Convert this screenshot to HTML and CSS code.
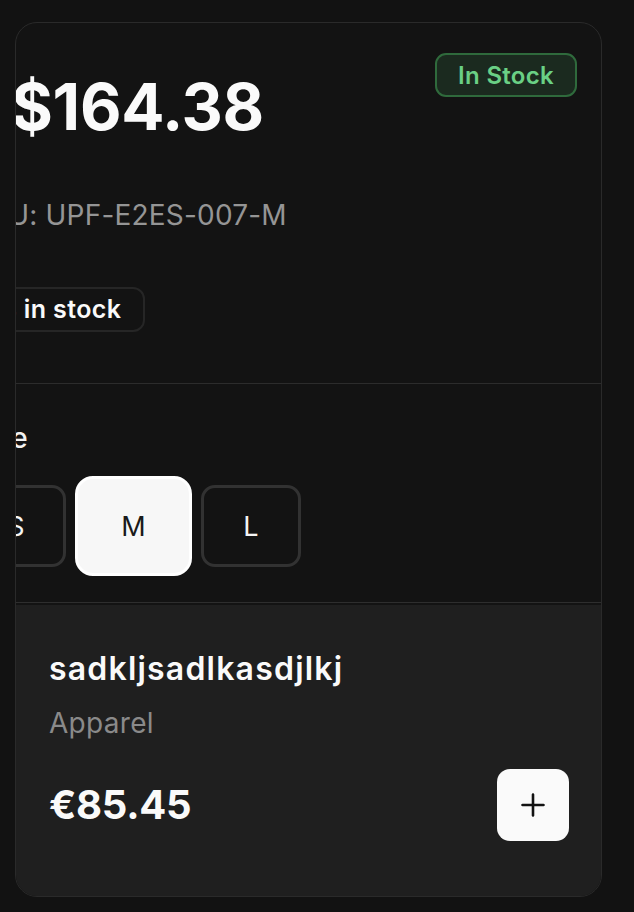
FILE: index.html
```html
<!DOCTYPE html>
<html lang="en">
<head>
<meta charset="utf-8">
<title>Product</title>
<link rel="stylesheet" href="styles.css">
</head>
<body>
<div class="card">
  <section class="summary">
    <div class="price-row">
      <div class="price">$164.38</div>
      <span class="badge">In Stock</span>
    </div>
    <div class="shifted">
      <div class="sku">SKU: UPF-E2ES-007-M</div>
      <div class="stock-pill">14 in stock</div>
    </div>
  </section>
  <section class="sizes">
    <div class="shifted">
      <div class="size-label">Size</div>
      <div class="size-options">
        <button class="size-btn">S</button>
        <button class="size-btn active">M</button>
        <button class="size-btn">L</button>
      </div>
    </div>
  </section>
  <section class="product">
    <div class="product-name">sadkljsadlkasdjlkj</div>
    <div class="product-cat">Apparel</div>
    <div class="product-row">
      <div class="product-price">€85.45</div>
      <button class="add-btn" aria-label="Add">
        <svg width="24" height="24" viewBox="0 0 24 24" fill="none" stroke="#121212" stroke-width="2.6" stroke-linecap="round"><path d="M12 1.5v21M1.5 12h21"/></svg>
      </button>
    </div>
  </section>
</div>
</body>
</html>
```
FILE: styles.css
```css
* { box-sizing: border-box; }
html, body { margin: 0; padding: 0; }
body {
  background: #121212;
  font-family: Inter, "Noto Sans", sans-serif;
  color: #fafafa;
}
.card {
  margin: 22px 32px 0 15px;
  height: 875px;
  border: 1px solid #2a2a2a;
  border-radius: 22px;
  overflow: hidden;
  background: #131313;
  display: flex;
  flex-direction: column;
}
.summary {
  padding: 24px 24px 51px;
  border-bottom: 1px solid #2c2c2c;
}
.price-row {
  display: flex;
  justify-content: space-between;
  align-items: flex-start;
}
.price {
  margin-top: 28px;
  margin-left: -29px;
  font-size: 64px;
  line-height: 1;
  font-weight: 700;
  letter-spacing: -0.3px;
}
.badge {
  margin-top: 6px;
  height: 44px;
  padding: 0 21px;
  display: inline-flex;
  align-items: center;
  border: 2px solid #2f6a3c;
  background: #1b2a1f;
  color: #6ad085;
  border-radius: 11px;
  font-size: 24px;
  font-weight: 600;
  letter-spacing: 0.3px;
}
.shifted { margin-left: -69px; }
.sku {
  margin-top: 60px;
  font-size: 28px;
  line-height: 1.2;
  color: #959595;
  letter-spacing: 0.2px;
}
.stock-pill {
  display: inline-flex;
  align-items: center;
  margin-top: 54px;
  margin-left: -6px;
  height: 45px;
  padding: 0 22px 0 22px;
  border: 2px solid #262626;
  border-radius: 12px;
  font-size: 25px;
  font-weight: 600;
  letter-spacing: 0.4px;
}
.sizes {
  padding: 38px 24px 26px;
  border-bottom: 1px solid #2e2e2e;
}
.size-label {
  font-size: 28px;
  line-height: 1.2;
  font-weight: 500;
  color: #f2f2f2;
}
.size-options {
  margin-top: 21px;
  margin-left: -5px;
  display: flex;
  align-items: center;
  gap: 9px;
  height: 100px;
}
.size-btn {
  width: 100px;
  height: 82px;
  border: 3px solid #323232;
  border-radius: 14px;
  background: transparent;
  color: #f5f5f5;
  font-family: inherit;
  font-size: 27px;
  font-weight: 400;
  padding: 0;
}
.size-btn.active {
  width: 117px;
  height: 100px;
  border: 3px solid #ffffff;
  border-radius: 18px;
  background: #f7f7f7;
  color: #1a1a1a;
}
.product {
  flex: 1;
  margin-top: 2px;
  background: #1f1f1f;
  padding: 45px 32px 32px 33px;
}
.product-name {
  font-size: 32px;
  line-height: 1.2;
  font-weight: 600;
  letter-spacing: 1.2px;
}
.product-cat {
  margin-top: 18px;
  font-size: 28px;
  line-height: 1.2;
  color: #8a8a8a;
  letter-spacing: 0.3px;
}
.product-row {
  margin-top: 29px;
  display: flex;
  justify-content: space-between;
  align-items: center;
}
.product-price {
  font-size: 40px;
  line-height: 1.2;
  font-weight: 700;
  letter-spacing: -0.3px;
}
.add-btn {
  width: 72px;
  height: 72px;
  border: none;
  border-radius: 13px;
  background: #fafafa;
  display: flex;
  align-items: center;
  justify-content: center;
  padding: 0;
}
```
